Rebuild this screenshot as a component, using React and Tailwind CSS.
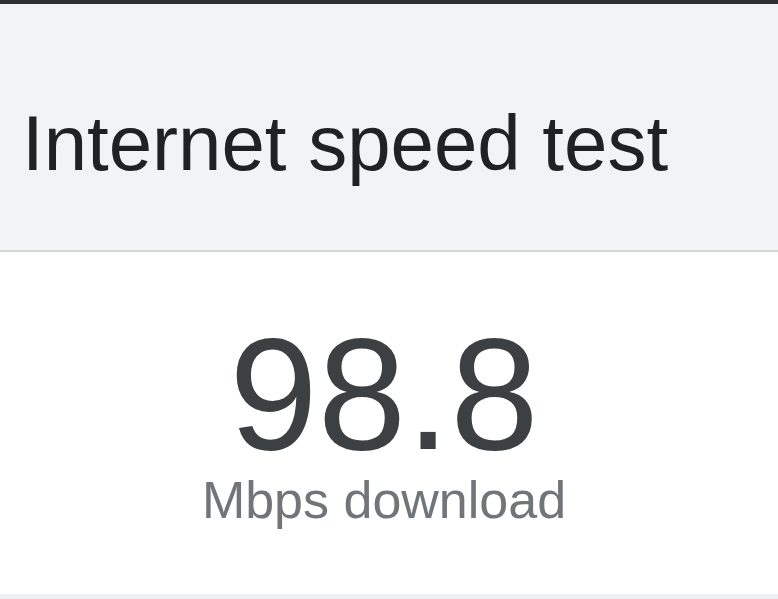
export default function App() {
  return (
    <div className="w-[778px] h-[599px] overflow-hidden bg-white flex flex-col" style={{ fontFamily: '"Liberation Sans", Arial, sans-serif' }}>
      <div className="h-[4px] shrink-0 bg-[#2f2f2f]" />
      <div className="h-[248px] shrink-0 bg-[#f1f3f4] border-b-2 border-[#d4d6d8] pt-[100px]">
        <h1 className="pl-[22px] text-[78px] leading-none text-[#202124] font-normal">Internet speed test</h1>
      </div>
      <div className="h-[342px] shrink-0 flex flex-col items-center pt-[63px] pr-[10px]">
        <div className="text-[159px] leading-none text-[#3c4043]">98.8</div>
        <div className="text-[52px] leading-none text-[#70757a]">Mbps download</div>
      </div>
      <div className="flex-1 bg-[#eeeff1]" />
    </div>
  );
}
